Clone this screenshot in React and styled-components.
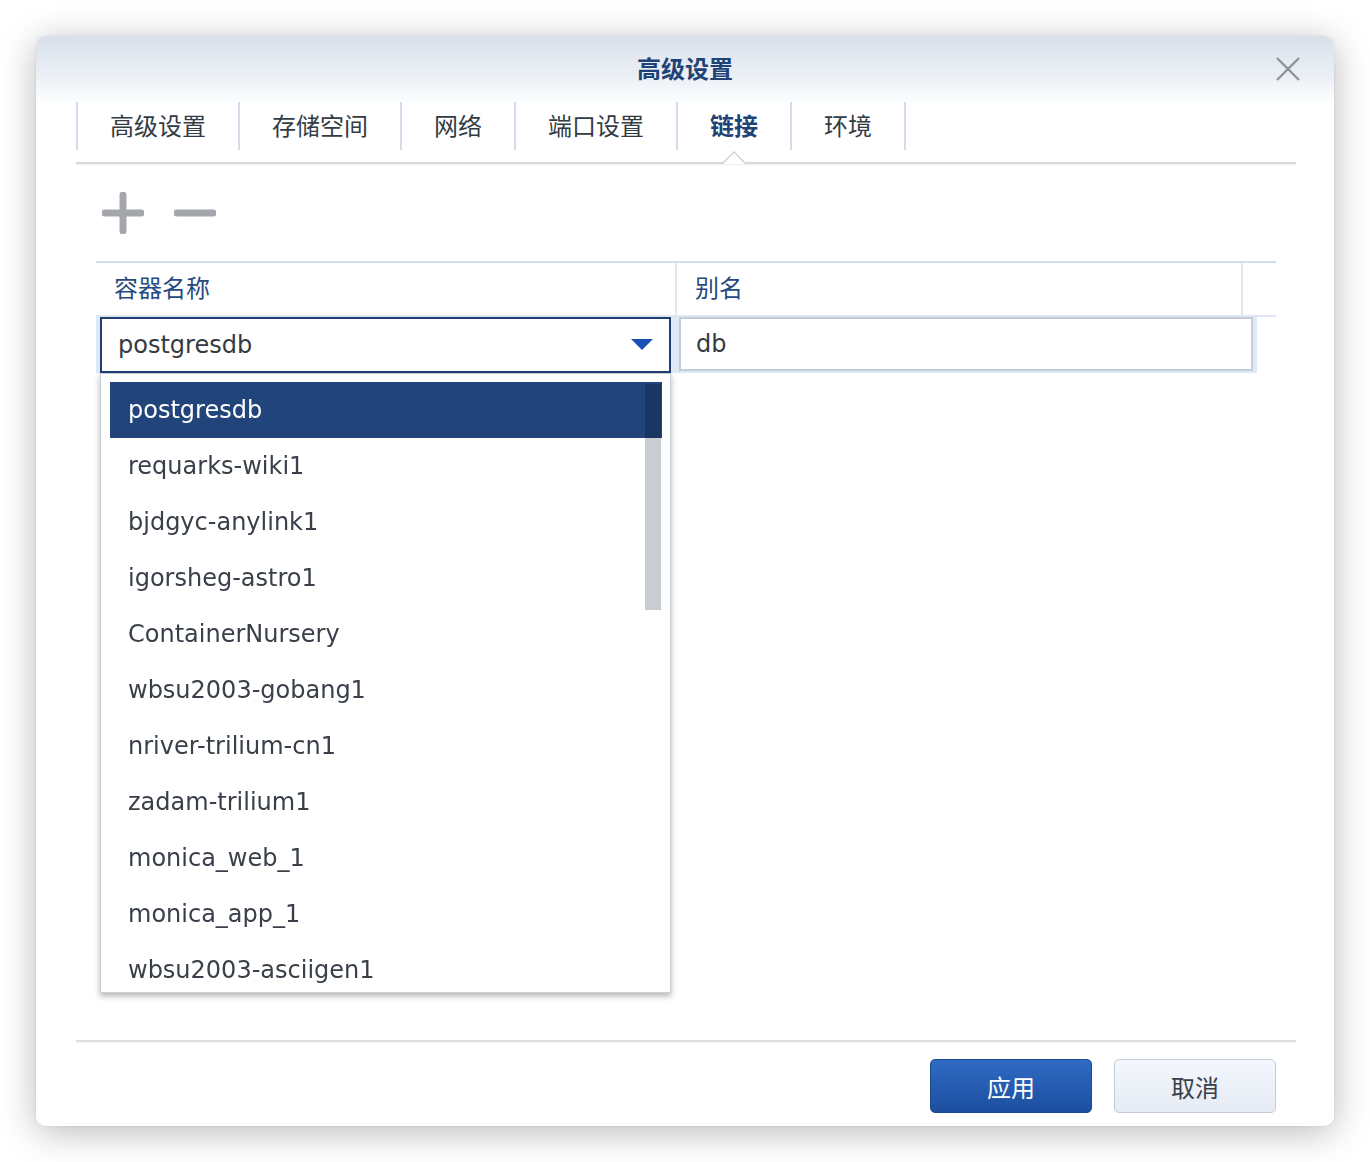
import React from "react";
import styled, { createGlobalStyle } from "styled-components";

const GlobalStyle = createGlobalStyle`
  html, body {
    margin: 0;
    padding: 0;
    background: #ffffff;
    font-family: "DejaVu Sans", "Noto Sans CJK SC", sans-serif;
  }
`;

const TABS = ["高级设置", "存储空间", "网络", "端口设置", "链接", "环境"];
const ACTIVE_TAB = "链接";

const CONTAINERS = [
  "postgresdb",
  "requarks-wiki1",
  "bjdgyc-anylink1",
  "igorsheg-astro1",
  "ContainerNursery",
  "wbsu2003-gobang1",
  "nriver-trilium-cn1",
  "zadam-trilium1",
  "monica_web_1",
  "monica_app_1",
  "wbsu2003-asciigen1",
];

const App = () => {
  return (
    <Page>
      <GlobalStyle />
      <Dialog>
        <Header>
          <Title>高级设置</Title>
          <CloseButton aria-label="close">
            <svg width="26" height="26" viewBox="0 0 26 26">
              <path d="M2 2 L24 24 M24 2 L2 24" stroke="#8e9499" strokeWidth="2.4" fill="none" />
            </svg>
          </CloseButton>
        </Header>

        <TabBar>
          {TABS.map((t) => (
            <Tab key={t} active={t === ACTIVE_TAB}>
              {t}
            </Tab>
          ))}
        </TabBar>

        <Body>
          <Toolbar>
            <IconButton aria-label="add">
              <svg width="42" height="42" viewBox="0 0 42 42">
                <path d="M21 3 V39 M3 21 H39" stroke="#a3a7ab" strokeWidth="7" strokeLinecap="round" />
              </svg>
            </IconButton>
            <IconButton aria-label="remove">
              <svg width="42" height="42" viewBox="0 0 42 42">
                <path d="M3 21 H39" stroke="#a3a7ab" strokeWidth="7" strokeLinecap="round" />
              </svg>
            </IconButton>
          </Toolbar>

          <Table>
            <HeadRow>
              <HeadCell>容器名称</HeadCell>
              <HeadCell>别名</HeadCell>
              <HeadSpacer />
            </HeadRow>
            <DataRow>
              <SelectCell>
                <SelectBox>
                  <span>postgresdb</span>
                  <svg width="22" height="12" viewBox="0 0 22 12">
                    <path d="M0 0 H22 L11 11 Z" fill="#1a4fb5" />
                  </svg>
                </SelectBox>
                <DropList>
                  <ScrollThumb />
                  {CONTAINERS.map((c, i) => (
                    <DropItem key={c} selected={i === 0}>
                      {c}
                    </DropItem>
                  ))}
                </DropList>
              </SelectCell>
              <InputCell>
                <TextInput>db</TextInput>
              </InputCell>
            </DataRow>
          </Table>
        </Body>

        <Footer>
          <Button primary>应用</Button>
          <Button>取消</Button>
        </Footer>
      </Dialog>
    </Page>
  );
};

export default App;

const Page = styled.div`
  width: 1370px;
  height: 1162px;
  padding: 36px;
  box-sizing: border-box;
  background: #ffffff;
`;

const Dialog = styled.div`
  display: flex;
  flex-direction: column;
  width: 1298px;
  height: 1090px;
  border-radius: 10px;
  background: linear-gradient(to bottom, #d8e0ea 0px, #eef2f7 45px, #ffffff 70px, #ffffff 100%);
  box-shadow: 0 6px 36px rgba(0, 0, 0, 0.28), 0 0 2px rgba(0, 0, 0, 0.12);
  overflow: hidden;
`;

const Header = styled.div`
  position: relative;
  display: flex;
  align-items: center;
  justify-content: center;
  height: 66px;
`;

const Title = styled.h1`
  margin: 0;
  padding-bottom: 4px;
  font-family: "Noto Sans CJK SC", sans-serif;
  font-size: 24px;
  font-weight: 700;
  color: #1f4277;
`;

const CloseButton = styled.div`
  position: absolute;
  right: 33px;
  top: 20px;
  display: flex;
`;

const TabBar = styled.div`
  display: flex;
  margin: 0 38px 0 40px;
  height: 60px;
  border-bottom: 2px solid #d6d9dd;
  box-shadow: 0 1px 1px rgba(0, 0, 0, 0.06);

  & > div:last-child {
    border-right: 2px solid #d3dde9;
  }
`;

const Tab = styled.div`
  position: relative;
  display: flex;
  align-items: center;
  height: 48px;
  padding: 0 32px 4px 32px;
  box-sizing: border-box;
  border-left: 2px solid #d3dde9;
  font-family: "Noto Sans CJK SC", sans-serif;
  font-size: 24px;
  font-weight: ${(p) => (p.active ? 700 : 400)};
  color: ${(p) => (p.active ? "#1f4277" : "#333b44")};
  white-space: nowrap;

  ${(p) =>
    p.active &&
    `
    &::before {
      content: "";
      position: absolute;
      left: 50%;
      bottom: -14px;
      margin-left: -13px;
      border-left: 13px solid transparent;
      border-right: 13px solid transparent;
      border-bottom: 13px solid #cfd3d8;
    }
    &::after {
      content: "";
      position: absolute;
      left: 50%;
      bottom: -14px;
      margin-left: -11px;
      border-left: 11px solid transparent;
      border-right: 11px solid transparent;
      border-bottom: 11px solid #ffffff;
    }
  `}
`;

const Body = styled.div`
  flex: 1;
  padding: 0 58px 0 60px;
`;

const Toolbar = styled.div`
  display: flex;
  align-items: center;
  gap: 30px;
  height: 97px;
  padding-left: 6px;
`;

const IconButton = styled.div`
  display: flex;
  width: 42px;
  height: 42px;
`;

const Table = styled.div`
  border-top: 2px solid #d5dfea;
`;

const HeadRow = styled.div`
  display: grid;
  grid-template-columns: 581px 566px 1fr;
  height: 52px;
  border-bottom: 2px solid #dfe7f0;
`;

const HeadCell = styled.div`
  display: flex;
  align-items: center;
  padding: 0 0 5px 18px;
  font-family: "Noto Sans CJK SC", sans-serif;
  font-size: 24px;
  color: #244a80;
  border-right: 2px solid #dfe7f0;
`;

const HeadSpacer = styled.div``;

const DataRow = styled.div`
  display: grid;
  grid-template-columns: 581px 580px;
  height: 56px;
  background: #dde9f7;
  width: 1161px;
`;

const SelectCell = styled.div`
  position: relative;
  padding: 0 6px 0 4px;
`;

const SelectBox = styled.div`
  display: flex;
  align-items: center;
  justify-content: space-between;
  height: 56px;
  box-sizing: border-box;
  padding: 0 16px 0 16px;
  border: 2px solid #1f3f73;
  background: #ffffff;
  font-size: 24px;
  color: #333a42;
`;

const DropList = styled.div`
  position: absolute;
  top: 56px;
  left: 4px;
  width: 571px;
  height: 620px;
  box-sizing: border-box;
  padding: 8px 8px 0 9px;
  background: #ffffff;
  border: 1px solid #c9d0d8;
  box-shadow: 0 3px 6px rgba(0, 0, 0, 0.3);
  overflow: hidden;
  z-index: 5;
`;

const ScrollThumb = styled.div`
  position: absolute;
  top: 10px;
  right: 9px;
  width: 16px;
  height: 226px;
  background: #c9ccd0;
  z-index: 2;
  mix-blend-mode: multiply;
`;

const DropItem = styled.div`
  display: flex;
  align-items: center;
  height: 56px;
  padding-left: 18px;
  font-size: 24px;
  color: ${(p) => (p.selected ? "#ffffff" : "#3a4049")};
  background: ${(p) => (p.selected ? "#21457a" : "transparent")};
  white-space: nowrap;
`;

const InputCell = styled.div`
  padding: 0 4px 2px 2px;
`;

const TextInput = styled.div`
  display: flex;
  align-items: center;
  height: 54px;
  box-sizing: border-box;
  padding-left: 15px;
  border: 2px solid #c3ccd7;
  background: #ffffff;
  font-size: 24px;
  color: #333a42;
`;

const Footer = styled.div`
  display: flex;
  justify-content: flex-end;
  gap: 22px;
  margin: 0 38px 0 40px;
  padding: 17px 20px 13px 0;
  border-top: 2px solid #dcdee1;
  box-shadow: inset 0 1px 1px rgba(0, 0, 0, 0.04);
`;

const Button = styled.div`
  display: flex;
  align-items: center;
  justify-content: center;
  width: 162px;
  height: 54px;
  box-sizing: border-box;
  border-radius: 5px;
  font-family: "Noto Sans CJK SC", sans-serif;
  font-size: 24px;
  border: 1px solid ${(p) => (p.primary ? "#1b4a94" : "#c2ccd8")};
  color: ${(p) => (p.primary ? "#ffffff" : "#3a4049")};
  background: ${(p) =>
    p.primary
      ? "linear-gradient(to bottom, #2f6bc4, #1c4e9f)"
      : "linear-gradient(to bottom, #f4f7fd, #e5ebf4)"};
`;
